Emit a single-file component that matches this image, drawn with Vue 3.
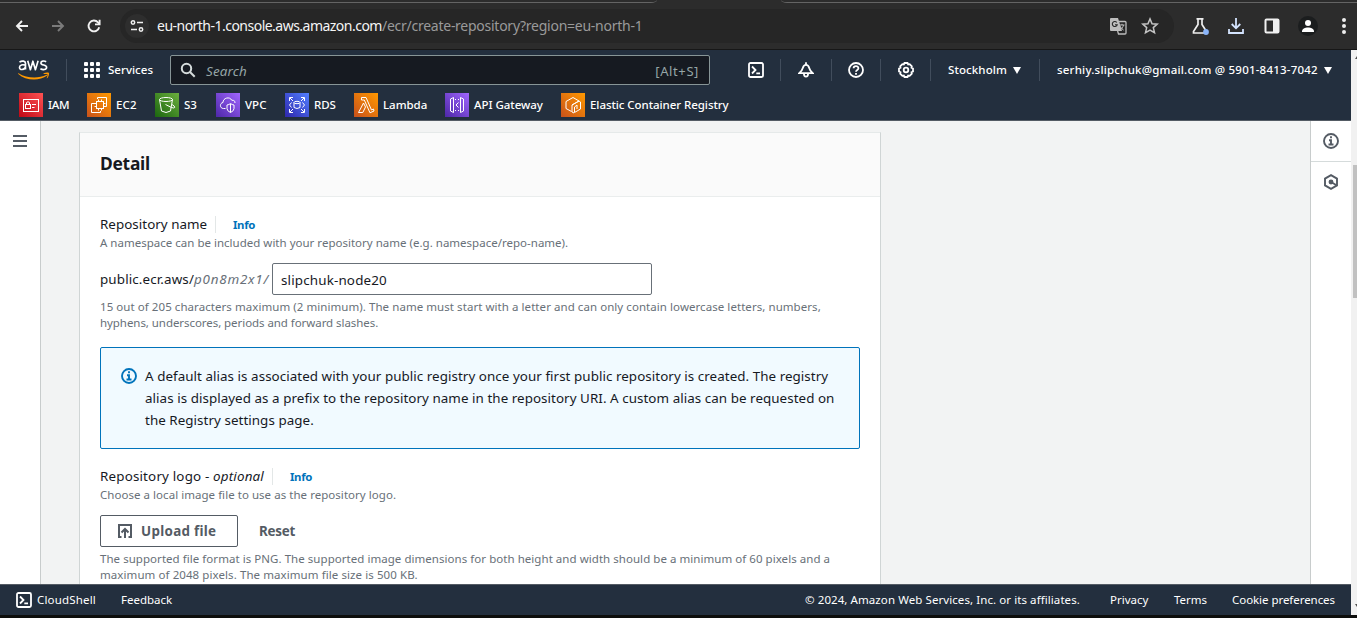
<script setup>
const favorites = [
  { name: 'IAM', icon: 'iam', width: 68, track: -0.35 },
  { name: 'EC2', icon: 'ec2', width: 68, track: 0.1 },
  { name: 'S3', icon: 's3', width: 61, track: 0 },
  { name: 'VPC', icon: 'vpc', width: 69, track: 0.05 },
  { name: 'RDS', icon: 'rds', width: 69, track: -0.1 },
  { name: 'Lambda', icon: 'lambda', width: 91, track: -0.04 },
  { name: 'API Gateway', icon: 'api', width: 116, track: -0.04 },
  { name: 'Elastic Container Registry', icon: 'ecr', width: 180, track: -0.06 },
]
</script>

<template>
  <div class="window">
    <header class="browser">
      <div class="tabs">
        <span class="tab-edge first"></span>
        <span class="tab-edge second"></span>
      </div>
      <div class="toolbar">
        <svg class="nav back" viewBox="0 0 16 16"><path d="M14 8H3M8 3L3 8l5 5" /></svg>
        <svg class="nav forward" viewBox="0 0 16 16"><path d="M2 8h11M8 3l5 5-5 5" /></svg>
        <svg class="nav reload" viewBox="0 0 16 16"><path d="M13.2 9.2A5.4 5.4 0 1 1 12 4.4l1.4 1.4" /><path d="M13.6 1.8v4.6H9" /></svg>
        <div class="address">
          <span class="site"><svg viewBox="0 0 16 16"><circle cx="4" cy="4.5" r="1.7" /><path d="M8 4.5h6M2 11.5h6" /><circle cx="12" cy="11.5" r="1.7" /></svg></span>
          <span class="host">eu-north-1.console.aws.amazon.com</span><span class="path">/ecr/create-repository?region=eu-north-1</span>
          <svg class="translate" viewBox="0 0 18 18">
            <path d="M2 1h7l4 13H2a1 1 0 0 1-1-1V2a1 1 0 0 1 1-1z" fill="#bdbdbd" />
            <path d="M9.5 4.5H16a1 1 0 0 1 1 1V16a1 1 0 0 1-1 1H9.5L8.600 14" fill="none" stroke="#bdbdbd" stroke-width="1.300" />
            <path d="M7.800 5.500a2.500 2.500 0 1 0 .4 2.300H6" fill="none" stroke="#282828" stroke-width="1.100" />
            <path d="M10.500 8h5M13 6.800V8M14.500 8c-.4 2-1.500 3.800-3.200 5M11.200 9.300c.8 1.700 2 3 3.400 3.800" fill="none" stroke="#bdbdbd" />
          </svg>
          <svg class="star" viewBox="0 0 18 18"><path d="M9 1.900l2.050 4.800 5.200.45-3.950 3.450 1.200 5.100L9 13l-4.500 2.700 1.200-5.100-3.950-3.450 5.200-.45z" /></svg>
        </div>
        <svg class="tool labs" viewBox="0 0 18 18"><path d="M4.500 1.800h7M6 2v5.500L1.500 14.500V16h13v-1.500L10 7.500V2" fill="none" stroke="#eee" stroke-width="1.700" /><circle cx="14" cy="15" r="2.900" fill="#8ab4f8" /></svg>
        <svg class="tool download" viewBox="0 0 18 18"><path d="M9 1v10M4.700 7L9 11.300 13.300 7M2 12v4h14v-4" /></svg>
        <svg class="tool panel" viewBox="0 0 18 18"><rect x="2.500" y="2.500" width="13" height="13" rx="1" fill="none" stroke="#f1f1f1" stroke-width="2" /><path d="M10 2.500h5.500v13H10z" fill="#f1f1f1" /></svg>
        <span class="avatar"><svg viewBox="0 0 16 16"><circle cx="8" cy="5" r="3" /><path d="M2 13.500c0-5.300 12-5.300 12 0V14H2z" /></svg></span>
        <span class="dots"><i></i><i></i><i></i></span>
      </div>
    </header>

    <div class="page">
      <div class="console">
        <nav class="aws-nav">
          <div class="primary">
            <svg class="logo" viewBox="0 0 32 22">
              <g fill="none" stroke="#fff" stroke-width="1.650" stroke-linejoin="round">
                <path d="M1.500 3.100c2.600-1.800 6-1.200 6 1.500v6M7.400 6.100C4.800 5.400 1.500 5.600 1.500 8.300c0 3.400 4.800 2.600 5.900-.2" />
                <path d="M9.700 1.800l2.700 8.900 2.500-8.500 2.500 8.500 2.700-8.900" />
                <path d="M28.200 2.700c-1.800-1-5.300-1-5.300 1.200 0 2.800 5.700 1.400 5.700 4.400 0 2.600-3.800 2.800-6.200 1.400" />
              </g>
              <path d="M.6 14.200c8 5.100 19.500 5.800 28 1.600.7-.3 1.200.3.600.8C21 22.600 7.500 21.700.3 14.900c-.4-.5-.1-.9.3-.7z" fill="#f90" />
              <path d="M25.700 14.300c2-.9 4.800-.9 5.200-.3.500.8-.2 3.800-1.800 5.200-.3.200-.6.100-.4-.3.500-1.200 1.200-3 .8-3.500-.4-.5-2.400-.4-3.600-.3-.5 0-.6-.5-.2-.8z" fill="#f90" />
            </svg>
            <i class="rule r1"></i>
            <span class="grid"><b v-for="n in 9" :key="n"></b></span>
            <span class="services">Services</span>
            <div class="search">
              <svg viewBox="0 0 16 16"><circle cx="6.500" cy="6.500" r="4.700" /><path d="M10 10l4.700 4.700" /></svg>
              <span class="hint">Search</span><span class="keys">[Alt+S]</span>
            </div>
            <svg class="gi g1" viewBox="0 0 16 16"><rect x="1" y="1" width="14" height="14" rx="1.500" /><path d="M4 4.500L7.500 8 4 11.500M8.300 11.300H12" /></svg>
            <i class="rule"></i>
            <svg class="gi" viewBox="0 0 16 16"><path d="M1.200 11.200C3.700 9.500 4.300 8 4.900 5.800 5.400 3.800 6.400 2.900 8 2.900s2.600.9 3.100 2.900c.6 2.200 1.200 3.700 3.700 5.400zM8 .3v2.500M5.900 11.500a2.100 3.200 0 0 0 4.200 0" /></svg>
            <i class="rule r3"></i>
            <svg class="gi" viewBox="0 0 16 16"><circle cx="8" cy="8" r="7" /><path d="M5.600 6.300c0-3 4.800-3 4.800 0C10.400 8 8 7.900 8 9.800M8 11v1.800" /></svg>
            <i class="rule"></i>
            <svg class="gi" viewBox="0 0 16 16"><path d="M6.500 1h3l.7 1.500 1.500-.3 2.100 2.100-.3 1.500L15 6.500v3l-1.500.7.300 1.500-2.100 2.100-1.500-.3L9.500 15h-3l-.7-1.500-1.500.3-2.100-2.100.3-1.500L1 9.500v-3l1.500-.7-.3-1.500 2.100-2.100 1.500.3z" /><circle cx="8" cy="8" r="2.300" /></svg>
            <i class="rule"></i>
            <span class="region">Stockholm</span><i class="caret"></i>
            <i class="rule r2"></i>
            <span class="account">serhiy.slipchuk@gmail.com @ 5901-8413-7042</span><i class="caret"></i>
          </div>
          <div class="favorites">
            <a v-for="f in favorites" :key="f.name" :style="{ width: f.width + 'px', letterSpacing: f.track + 'px' }">
              <svg :class="['tile', f.icon]" viewBox="0 0 24 24">
                <g v-if="f.icon === 'iam'"><rect x="4.500" y="6.500" width="15" height="12" /><rect x="6.500" y="11.500" width="5" height="4" /><path d="M7.500 11V9.500q1.500-1.500 3 0V11M13 11.500h4M13 14.500h2.500" /></g>
                <g v-else-if="f.icon === 'ec2'"><rect x="9.500" y="8.500" width="7" height="7" /><path d="M11.500 6.500v2M14.500 6.500v2M11.500 15.500v2M14.500 15.500v2M7.500 10.500h2M7.500 13.500h2M16.500 10.500h2M16.500 13.500h2M10.500 6V4.500h9v9H18M8 10.500H4.500v9h9V18" /></g>
                <g v-else-if="f.icon === 's3'"><ellipse cx="11" cy="6.500" rx="6.500" ry="2" /><path d="M4.500 6.500l2 11.500q4.500 3 9 0l2-11.500M10.500 11.500l6 3q3 1 3.200 0 .3-1.500-2.700-3" /></g>
                <g v-else-if="f.icon === 'vpc'"><path d="M9.500 15.500H7.500C3.500 15.500 3.500 10 7 9.500c-.2-4.500 6.800-6.500 8.800-2.200 2.400-.3 3.200.8 3.200 2.700M14.500 10.500q1.500 1.300 3.500 1.500v3.500q0 2.500-3.500 4-3.500-1.500-3.500-4V12q2-.2 3.500-1.500zM14.500 11v8.500" /></g>
                <g v-else-if="f.icon === 'rds'"><path d="M4.500 8V4.500H8M5 5l3 3M16 4.500h3.500V8M19 5l-3 3M4.500 16v3.500H8M5 19l3-3M16 19.500h3.500V16M19 19l-3-3M6.500 9.500l-2 2.500 2 2.500M17.500 9.500l2 2.500-2 2.500M9 9.500v5q3 2 6 0v-5" /><ellipse cx="12" cy="9.500" rx="3" ry="1.200" /></g>
                <g v-else-if="f.icon === 'lambda'"><path d="M7.500 4.500h4.500l5.500 12.500 2-1 .5 2-4 1.800L10.300 7H7.500zM9.500 10l2 4-2.700 5.500H4.500z" /></g>
                <g v-else-if="f.icon === 'api'"><path d="M8.500 4.500L5.500 6v12l3 1.500zM15.500 4.500l3 1.500v12l-3 1.500zM10 6.500h1M13 6.500h1M10 17.500h1M13 17.500h1M13.500 9.500L11 12l2.500 2.500" /></g>
                <g v-else><path d="M10.500 18.500L5 15.500v-7l7-4 6 3.500-7 4v7l2 1M11 12l7-4 1.500 1v7l-6 3.500V14l2.500-2v4" /></g>
              </svg>
              <span>{{ f.name }}</span>
            </a>
          </div>
        </nav>

        <div class="body">
          <aside class="left"><span class="burger"></span></aside>
          <main>
            <section class="card">
              <div class="card-head"><h2>Detail</h2></div>
              <div class="card-body">
                <div class="label"><span class="name-label">Repository name</span><a class="info">Info</a></div>
                <p class="help ns">A namespace can be included with your repository name (e.g. namespace/repo-name).</p>
                <div class="name-row">
                  <span class="prefix">public.ecr.aws/</span><em>p0n8m2x1/</em>
                  <div class="input">slipchuk-node20</div>
                </div>
                <p class="help limits">15 out of 205 characters maximum (2 minimum). The name must start with a letter and can only contain lowercase letters, numbers,<br /><span class="tight">hyphens, underscores, periods and forward slashes.</span></p>
                <div class="alert">
                  <svg viewBox="0 0 16 16"><circle cx="8" cy="8" r="7" /><path d="M8 3.300v2M6 7.300h2v4M5.500 11.500h5" /></svg>
                  <p>A default alias is associated with your public registry once your first public repository is created. The registry<br />alias is displayed as a prefix to the repository name in the repository URI. A custom alias can be requested on<br />the Registry settings page.</p>
                </div>
                <div class="label logo-label"><span>Repository logo - <i>optional</i></span><a class="info">Info</a></div>
                <p class="help">Choose a local image file to use as the repository logo.</p>
                <div class="actions">
                  <div class="upload">
                    <svg viewBox="0 0 16 16"><path d="M4.500 14H2V2h12v12h-2.500M8 15V6M4.500 9.500L8 6l3.500 3.500" /></svg><span>Upload file</span>
                  </div>
                  <span class="reset">Reset</span>
                </div>
                <p class="help formats">The supported file format is PNG. The supported image dimensions for both height and width should be a minimum of 60 pixels and a<br /><span class="wide">maximum of 2048 pixels. The maximum file size is 500 KB.</span></p>
              </div>
            </section>
          </main>
          <aside class="right">
            <div class="cell"><svg viewBox="0 0 16 16"><circle cx="8" cy="8" r="7" /><path d="M8 3.300v2M6 7.300h2v4M5.500 11.500h5" /></svg></div>
            <div class="cell"><svg viewBox="0 0 16 16"><path d="M8 1.200l6 3.400v6.800l-6 3.400-6-3.400V4.600z" /><circle cx="8" cy="8" r="1.500" fill="#545b64" /><path d="M8 8l5.500 3.200" /></svg></div>
          </aside>
        </div>

        <footer>
          <svg class="gi" viewBox="0 0 16 16"><rect x="1" y="1" width="14" height="14" rx="1.500" /><path d="M4 4.500L7.500 8 4 11.500M8.300 11.300H12" /></svg>
          <span class="cloudshell">CloudShell</span><span class="feedback">Feedback</span>
          <span class="copyright">© 2024, Amazon Web Services, Inc. or its affiliates.</span>
          <span class="privacy">Privacy</span><span class="terms">Terms</span><span class="cookies">Cookie preferences</span>
        </footer>
      </div>
      <div class="scrollbar"><i class="up"></i><span class="thumb"></span><i class="down"></i></div>
    </div>
  </div>
</template>

<style>
body { margin: 0; overflow: hidden; background: #0b0c0c; }
</style>

<style scoped>
* { box-sizing: border-box; }
.window { width: 1357px; height: 618px; overflow: hidden; display: flex; flex-direction: column; background: #0d0e0c; font-family: "Noto Sans", "Open Sans", sans-serif; color: #16191f; }
svg { flex: none; }
p, h2 { margin: 0; }
span, em, p { white-space: nowrap; }

.browser { height: 50px; flex: none; background: #2c2c2c; border-bottom: 1px solid #171717; }
.tabs { height: 9px; display: flex; justify-content: space-between; }
.tab-edge { height: 3px; margin-top: 0; border-bottom: 1px solid #646464; }
.first { width: 657px; border-bottom-right-radius: 6px 3px; }
.second { width: 576px; border-bottom-left-radius: 6px 3px; }
.toolbar { height: 34px; display: flex; align-items: center; }
.nav { width: 16px; height: 16px; fill: none; stroke: #f1f1f1; stroke-width: 1.900; }
.back { margin-left: 14px; }
.forward { margin-left: 20px; stroke: #7b7b7b; }
.reload { margin-left: 20px; }
.address { width: 1054px; height: 34px; margin-left: 18px; border-radius: 17px; background: #262626; display: flex; align-items: center; font-size: 14px; line-height: 20px; }
.site { width: 24px; height: 24px; margin-left: 5px; border-radius: 50%; background: #2e2e2e; display: flex; align-items: center; justify-content: center; }
.site svg { width: 16px; height: 16px; fill: none; stroke: #f1f1f1; stroke-width: 1.500; }
.host { margin-left: 8px; width: 225px; color: #f5f5f5; letter-spacing: -0.52px; }
.path { width: 260px; color: #9a9a9a; letter-spacing: -0.26px; }
.translate { width: 18px; height: 18px; margin-left: 467px; }
.star { width: 18px; height: 18px; margin-left: 14px; fill: none; stroke: #c4c4c4; stroke-width: 1.500; }
.tool { width: 18px; height: 18px; }
.labs { margin-left: 18px; }
.download { margin-left: 17px; fill: none; stroke: #d3e3fd; stroke-width: 1.800; }
.panel { margin-left: 18px; }
.avatar { width: 20px; height: 20px; margin-left: 17px; border-radius: 50%; background: #1b1d1e; display: flex; align-items: center; justify-content: center; }
.avatar svg { width: 16px; height: 16px; fill: #fff; }
.dots { margin-left: 24px; display: flex; flex-direction: column; gap: 2px; }
.dots i { width: 4px; height: 4px; border-radius: 50%; background: #eee; }

.page { height: 565px; display: flex; flex: none; }
.console { width: 1351px; display: flex; flex-direction: column; }
.aws-nav { height: 71px; flex: none; background: #232f3e; border-bottom: 1px solid #545b64; color: #fff; font-size: 11.5px; font-weight: 500; }
.primary { height: 40px; display: flex; align-items: center; line-height: 20px; }
.logo { width: 32px; height: 22px; margin-left: 18px; }
.rule { width: 1px; height: 22px; margin: 0 16px 0 16px; background: #414d5c; flex: none; }
.primary .gi + .rule { margin: 0 17px 0 16px; }
.primary .gi + .r3 { margin: 0 16px 0 17px; }
.primary .r1 { margin: 0 17px 0 16px; }
.grid { width: 16px; height: 16px; display: grid; grid-template-columns: repeat(3, 4px); grid-auto-rows: 4px; gap: 2px; }
.grid b { background: #fff; border-radius: 1px; }
.services { margin-left: 8px; width: 45px; letter-spacing: 0.03px; }
.search { width: 540px; height: 30px; margin-left: 17px; border: 1px solid #879596; border-radius: 2px; background: #161a21; display: flex; align-items: center; color: #95a5a6; padding: 2px 10px 0 9px; font-weight: 400; }
.search svg { width: 16px; height: 16px; margin-top: -2px; fill: none; stroke: #d5dbdb; stroke-width: 2; }
.hint { margin-left: 10px; font-style: italic; font-size: 13.4px; letter-spacing: 0.15px; }
.keys { margin-left: auto; font-size: 13px; letter-spacing: 0.6px; }
.gi { width: 16px; height: 16px; fill: none; stroke: #fff; stroke-width: 1.800; }
.g1 { margin-left: 38px; }
.region { width: 59px; letter-spacing: 0.1px; }
.caret { width: 0; height: 0; margin-left: 6px; border: 4px solid transparent; border-top: 7px solid #fff; border-bottom: 0; }
.primary .r2 { margin: 0 17px 0 18px; }
.account { width: 261px; letter-spacing: 0.21px; }
.favorites { display: flex; margin: 3px 0 0 19px; }
.favorites a { display: flex; align-items: center; gap: 5px; height: 24px; }
.favorites a span { line-height: 24px; }
.tile { width: 24px; height: 24px; fill: none; stroke: #fff; stroke-width: 1; }
.iam { background: linear-gradient(45deg, #bd0816, #ff5252); }
.ec2, .lambda, .ecr { background: linear-gradient(45deg, #c8511b, #f90); }
.s3 { background: linear-gradient(45deg, #1b660f, #6cae3e); }
.vpc, .api { background: linear-gradient(45deg, #4d27a8, #a166ff); }
.rds { background: linear-gradient(45deg, #2e27ad, #527fff); }

.body { height: 463px; flex: none; display: flex; overflow: hidden; background: #f2f3f3; }
.left { width: 41px; flex: none; background: #fff; border-right: 1px solid #c8cccc; }
.burger { display: block; width: 14px; height: 12px; margin: 14px 0 0 13px; border: solid #545b64; border-width: 2px 0; background: linear-gradient(#545b64, #545b64) 0 3px / 14px 2px no-repeat; }
main { width: 1269px; padding: 11px 0 0 38px; }
.card { width: 802px; height: 600px; background: #fff; border: 1px solid #d0d5d5; border-top-color: #e5e9e9; }
.card-head { height: 64px; padding: 18px 20px; background: #fafafa; border-bottom: 1px solid #eaeded; }
h2 { font-size: 17.400px; line-height: 24px; font-weight: 700; letter-spacing: -0.25px; }
.card-body { padding: 16px 20px; }
.label { height: 22px; display: flex; align-items: center; font-size: 13.4px; line-height: 22px; }
.name-label { width: 107px; letter-spacing: 0.03px; }
.info { height: 17px; margin-left: 8px; padding-left: 17px; border-left: 1px solid #e3e7e7; color: #0073bb; font-size: 11.4px; font-weight: 700; line-height: 18px; letter-spacing: -0.35px; }
.help { color: #687078; font-size: 11.5px; line-height: 16px; letter-spacing: 0.04px; }
.ns { letter-spacing: 0.01px; }
.name-row { height: 32px; margin-top: 12px; display: flex; align-items: center; font-size: 13.4px; line-height: 22px; }
.prefix { width: 94px; letter-spacing: 0.13px; }
em { width: 78px; color: #687078; letter-spacing: 0.78px; }
.input { width: 380px; height: 32px; border: 1px solid #687078; border-radius: 2px; padding: 5px 8px; line-height: 22px; letter-spacing: 0.16px; }
.limits { margin-top: 4px; letter-spacing: 0.06px; }
.tight { letter-spacing: -0.06px; }
.wide { letter-spacing: 0.08px; }
.alert { height: 102px; margin-top: 16px; padding: 17px 20px; border: 1px solid #0073bb; border-radius: 2px; background: #f1faff; display: flex; font-size: 13.4px; line-height: 22px; letter-spacing: 0.05px; }
.alert svg { width: 16px; height: 16px; margin: 3px 8px 0 0; stroke: #0073bb; }
.alert svg, .cell svg { fill: none; stroke-width: 1.900; }
.logo-label { margin-top: 16px; letter-spacing: 0.17px; }
.actions { height: 32px; margin-top: 12px; display: flex; align-items: center; color: #545b64; font-size: 13.4px; font-weight: 700; line-height: 22px; }
.upload { width: 138px; height: 32px; border: 1px solid #545b64; border-radius: 2px; display: flex; align-items: center; padding-left: 16px; letter-spacing: 0.3px; }
.upload svg { width: 16px; height: 16px; margin-right: 8px; fill: none; stroke: #545b64; stroke-width: 2; }
.reset { margin-left: 21px; letter-spacing: -0.25px; }
.formats { margin-top: 4px; letter-spacing: 0.045px; }
.right { width: 41px; flex: none; background: #fff; border-left: 1px solid #c8cccc; }
.cell { height: 41px; display: flex; align-items: center; justify-content: center; border-bottom: 1px solid #d5dbdb; }
.cell:last-child { height: 40px; border: 0; }
.cell svg { width: 16px; height: 16px; stroke: #545b64; }

footer { height: 31px; flex: none; display: flex; align-items: center; padding-left: 16px; background: #232f3e; border-top: 1px solid #545b64; color: #fff; font-size: 11.5px; line-height: 20px; }
.cloudshell { width: 59px; margin-left: 5px; letter-spacing: 0.18px; }
.feedback { width: 51px; margin-left: 25px; letter-spacing: -0.02px; }
.copyright { width: 275px; margin-left: 633px; letter-spacing: 0.08px; }
.privacy { width: 39px; margin-left: 30px; }
.terms { width: 33px; margin-left: 25px; }
.cookies { margin-left: 25px; letter-spacing: -0.05px; }
.scrollbar { width: 6px; background: #f1f1f1; display: flex; flex-direction: column; align-items: flex-end; overflow: hidden; }
.thumb { width: 4px; height: 133px; margin-top: 106px; background: #c1c1c1; }
.up { width: 2px; height: 3px; margin-top: 6px; background: #505050; clip-path: polygon(100% 0, 100% 100%, 0 100%); }
.down { width: 2px; height: 3px; margin-top: 306px; background: #505050; clip-path: polygon(0 0, 100% 0, 100% 100%); }
</style>
